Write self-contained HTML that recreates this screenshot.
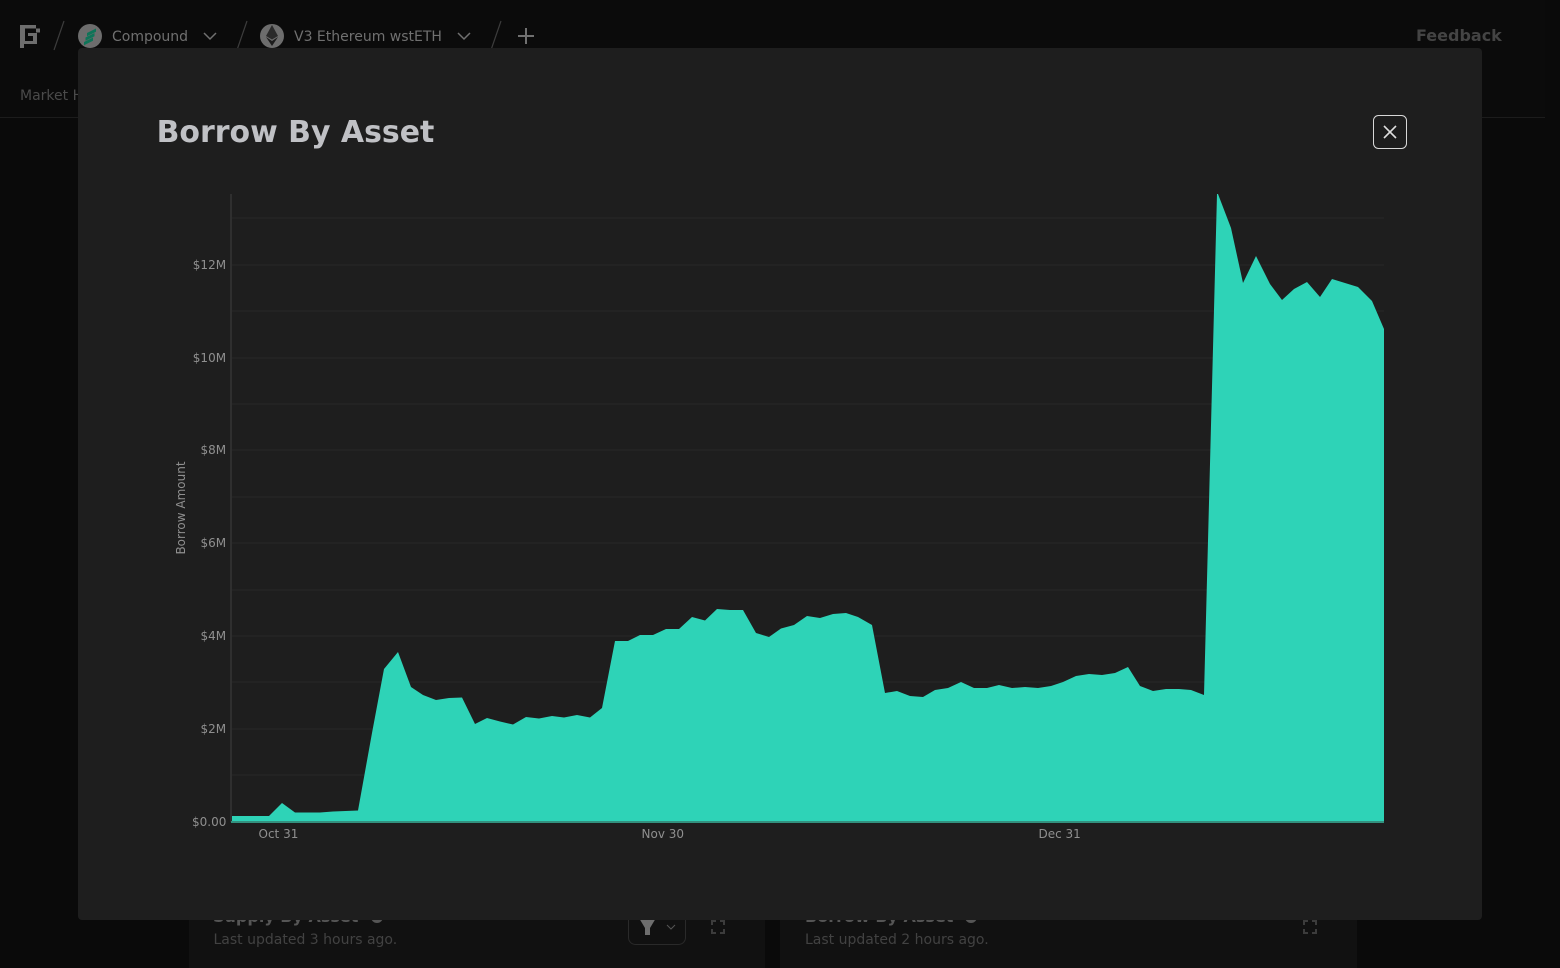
<!DOCTYPE html>
<html><head><meta charset="utf-8"><style>
html,body{margin:0;padding:0;width:1560px;height:968px;overflow:hidden;background:#0a0a0a;font-family:"DejaVu Sans",sans-serif}
body{position:relative}
.t{position:absolute;white-space:nowrap;line-height:1}
.card{position:absolute;top:880px;height:88px;background:#111}
svg{position:absolute;left:0;top:0}
</style></head><body>
<div style="position:absolute;left:0;top:0;width:1545px;height:117px;background:#0b0b0b;border-bottom:1px solid #1c1c1c"></div>
<div class="card" style="left:189px;width:576px"></div>
<div class="card" style="left:780px;width:577px"></div>
<div class="t" style="left:112px;top:30px;font-size:14px;color:#707070">Compound</div>
<div class="t" style="left:294px;top:30px;font-size:14px;color:#707070">V3 Ethereum wstETH</div>
<div class="t" style="left:20px;top:89px;font-size:14px;color:#4a4a4a">Market Health</div>
<div class="t" style="left:1416px;top:28px;font-size:16px;font-weight:bold;color:#444">Feedback</div>
<div class="t" style="left:213.500px;top:933px;font-size:14px;color:#424242">Last updated 3 hours ago.</div>
<div class="t" style="left:805px;top:933px;font-size:14px;color:#424242">Last updated 2 hours ago.</div>
<div class="t" style="left:213px;top:909px;font-size:16px;font-weight:bold;color:#555">Supply By Asset</div>
<div class="t" style="left:805px;top:909px;font-size:16px;font-weight:bold;color:#555">Borrow By Asset</div>
<svg width="1560" height="968" viewBox="0 0 1560 968">
<g fill="#6e6e6e"><rect x="20" y="25" width="16" height="3.500"/><rect x="20" y="25" width="5" height="19"/><rect x="36" y="28.500" width="4" height="4"/><rect x="28" y="33" width="9" height="3"/><rect x="33" y="33" width="4" height="11"/><rect x="25" y="41" width="12" height="3"/><rect x="20" y="44" width="4" height="4"/></g>
<g stroke="#3c3c3c" stroke-width="1.200"><path d="M64 21L54 50M247 21L237 50M501 21L491 50"/></g>
<circle cx="90" cy="36" r="12" fill="#6d6d6d"/>
<path fill="#0e7458" d="M87 33L96 28.500V31.800L87 36.300zM85.500 37.500L94.500 33V36.300L85.500 40.800zM84 42L93 37.500V40.800L84 45.300z"/>
<circle cx="272" cy="36" r="12" fill="#6d6d6d"/>
<path fill="#2a2a2a" d="M272 25l-6 11 6 3.500 6-3.500z"/><path fill="#1c1c1c" d="M272 41l-6-4 6 9 6-9z"/>
<path fill="none" stroke="#707070" stroke-width="1.500" d="M204 33l6 6 6-6M458 33l6 6 6-6"/>
<path stroke="#707070" stroke-width="2" d="M526 28v16M518 36h16"/>
<circle cx="377" cy="917" r="6" fill="#555"/><circle cx="971" cy="917" r="6" fill="#555"/>
<rect x="628.500" y="905" width="57" height="39.500" rx="7" fill="none" stroke="#2a2a2a"/>
<path fill="#6e6e6e" d="M639 918h17l-6 10v7h-5v-7z"/>
<path fill="none" stroke="#555" d="M667 925l4 4 4-4"/>
<g fill="none" stroke="#3c3c3c" stroke-width="2"><path d="M712 925v-4h4M724 925v-4h-4M712 929v4h4M724 929v4h-4M1304 925v-4h4M1316 925v-4h-4M1304 929v4h4M1316 929v4h-4"/></g>
<rect x="78" y="48" width="1404" height="872" rx="4" fill="#1e1e1e"/>
<path stroke="#232323" stroke-width="2" d="M232 218H1384M232 265H1384M232 311H1384M232 358H1384M232 404H1384M232 450H1384M232 497H1384M232 543H1384M232 590H1384M232 636H1384M232 682H1384M232 729H1384M232 775H1384"/>
<path fill="#2ed3b7" d="M231 816L269 816L282 803L295 812.500L320 812.500L333 811.500L358 810.500L372 733L384 669L398 652L411 687L423 695L436 700L449 698L462 697.500L475 724L487 718L500 721.500L513 724.500L526 717L539 718.500L552 716L564 717.500L577 715L590 717.500L602 708L615 641L628 641L640 635L653 635L666 629L679 629L692 617L705 620.500L717 609L730 610L743 610L756 633L769 637L781 628.500L794 625L807 616L820 618L833 614L846 613L858 617L872 625L885 693L897 691L910 696L923 697L935 690L948 688L961 682L974 688L987 688L999 685L1012 688L1025 687L1038 688L1051 686L1063 682L1076 676L1089 674L1102 675L1115 673L1128 667L1140 686L1153 691L1166 689L1179 689L1191 690L1204 695L1217 194L1218 194L1231 228L1243 283L1256 256L1270 284L1282 300L1294 289L1307 282L1320 297L1332 279L1345 283L1358 287L1372 301L1384 329L1384 822L231 822Z"/>
<path stroke="#2f2f2f" stroke-width="2" d="M231 194V822"/>
<path stroke="#33917f" stroke-width="2" d="M231 822H1384"/>
<rect x="1373.500" y="115.500" width="33" height="33" rx="5" fill="none" stroke="#d8d8d8"/>
<path stroke="#e0e0e0" stroke-width="1.600" d="M1384 126l12 12M1396 126l-12 12"/>
</svg>
<div class="t" style="left:156.600px;top:118px;font-size:29.950px;font-weight:bold;color:#c0c1c5">Borrow By Asset</div>
<div class="t" style="left:192.800px;top:259px;font-size:12px;color:#8f8f8f">$12M</div>
<div class="t" style="left:192.800px;top:352px;font-size:12px;color:#8f8f8f">$10M</div>
<div class="t" style="left:200.500px;top:444px;font-size:12px;color:#8f8f8f">$8M</div>
<div class="t" style="left:200.500px;top:537px;font-size:12px;color:#8f8f8f">$6M</div>
<div class="t" style="left:200.500px;top:630px;font-size:12px;color:#8f8f8f">$4M</div>
<div class="t" style="left:200.500px;top:723px;font-size:12px;color:#8f8f8f">$2M</div>
<div class="t" style="left:192px;top:816px;font-size:12px;color:#8f8f8f">$0.00</div>
<div class="t" style="left:258.500px;top:828px;font-size:12px;color:#8f8f8f">Oct 31</div>
<div class="t" style="left:641.500px;top:828px;font-size:12px;color:#8f8f8f">Nov 30</div>
<div class="t" style="left:1038.500px;top:828px;font-size:12px;color:#8f8f8f">Dec 31</div>
<div class="t" style="left:181px;top:508px;font-size:12px;color:#8f8f8f;transform:translate(-50%,-50%) rotate(-90deg)">Borrow Amount</div>
</body></html>
